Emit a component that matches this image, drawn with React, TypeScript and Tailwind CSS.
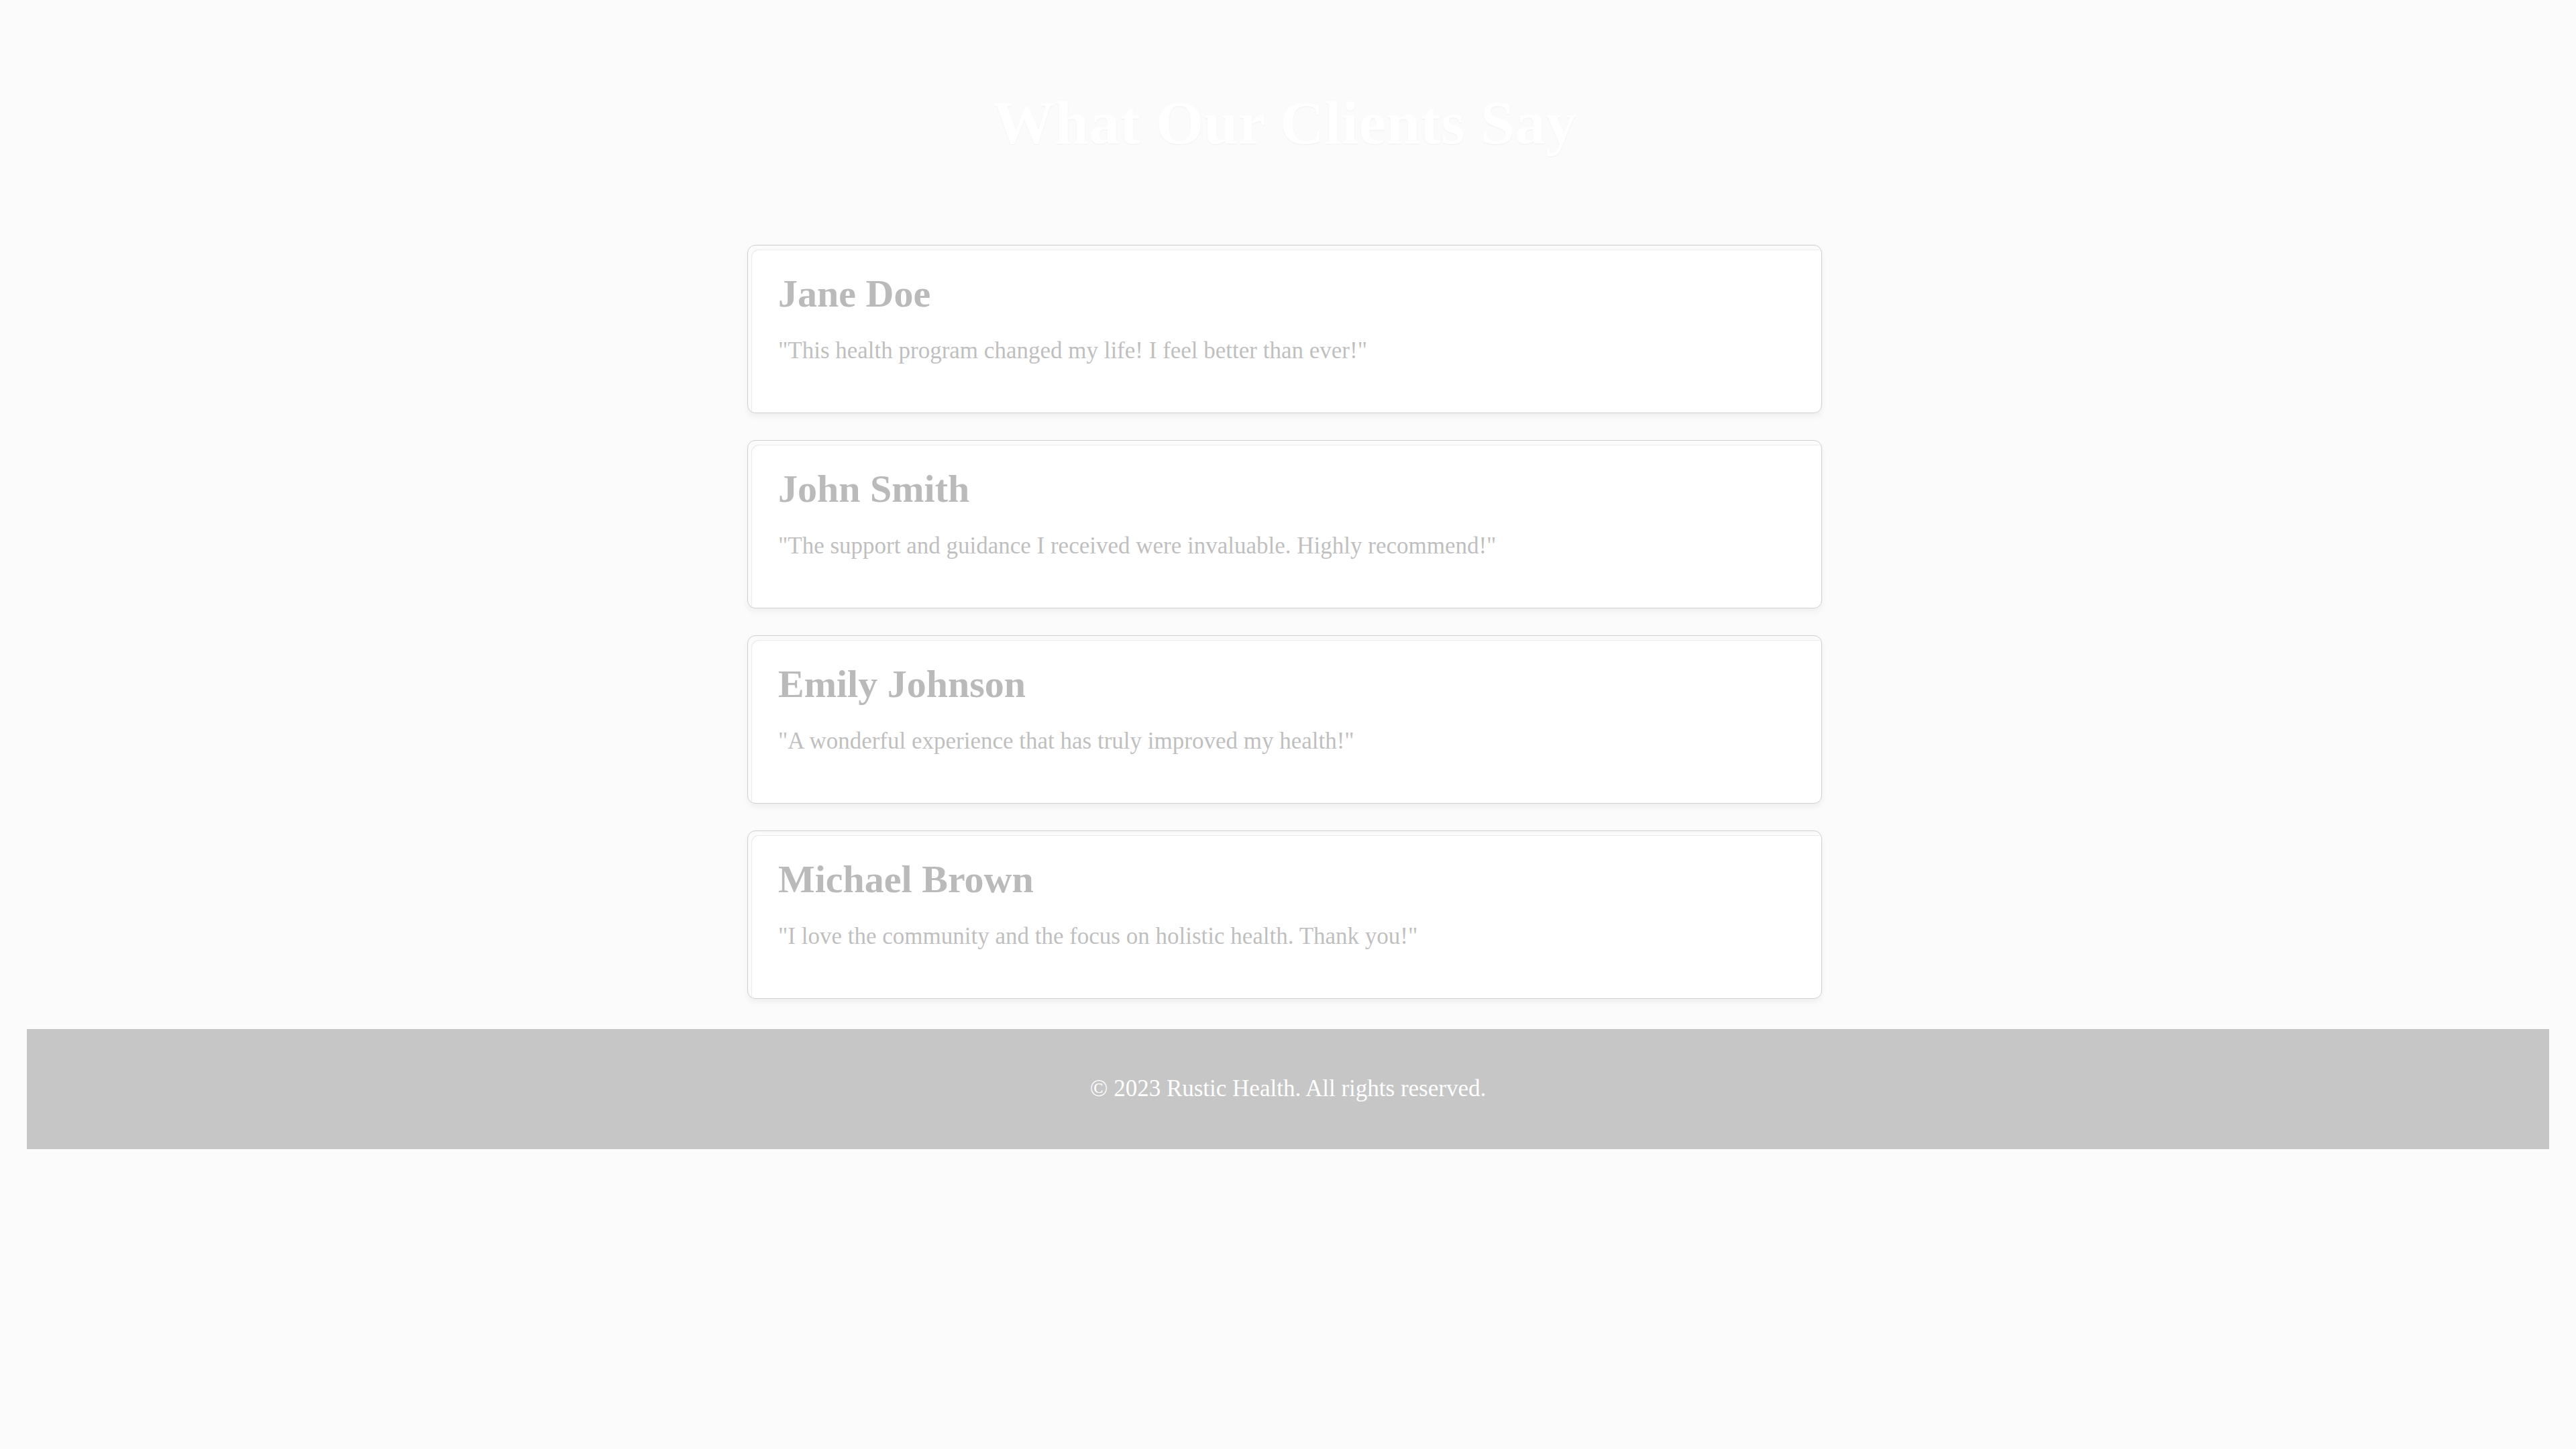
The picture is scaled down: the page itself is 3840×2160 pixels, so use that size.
import React from 'react';

const testimonials = [
  { name: 'Jane Doe', quote: '"This health program changed my life! I feel better than ever!"' },
  { name: 'John Smith', quote: '"The support and guidance I received were invaluable. Highly recommend!"' },
  { name: 'Emily Johnson', quote: '"A wonderful experience that has truly improved my health!"' },
  { name: 'Michael Brown', quote: '"I love the community and the focus on holistic health. Thank you!"' },
];

const App: React.FC = () => {
  return (
    <div className="min-h-screen bg-[#fbfbfb] font-['Liberation_Serif',serif]">
      {/* Testimonials */}
      <section className="pl-[40px] pr-[50px] pt-[128px]">
        <h2 className="text-center text-[92px] font-bold leading-[1.2] text-white [text-shadow:0_1px_2px_rgba(0,0,0,0.05)]">
          What Our Clients Say
        </h2>

        <div className="mx-auto mt-[127px] flex w-[1602px] flex-col gap-[40px]">
          {testimonials.map((t) => (
            <div
              key={t.name}
              className="h-[251px] rounded-[12px] border border-[#d0d0d0] bg-white pl-[45px] pr-[45px] pt-[37px] shadow-[inset_5px_6px_0_#fbfbfb,inset_6px_7px_0_#ebebeb,0_5px_10px_rgba(0,0,0,0.05)]"
            >
              <h3 className="text-[58px] font-bold leading-[1.2] text-[#bababa]">{t.name}</h3>
              <p className="mt-[24px] text-[35px] leading-[1.5] text-[#bfbfbf]">{t.quote}</p>
            </div>
          ))}
        </div>
      </section>

      {/* Footer */}
      <footer className="mx-[40px] mt-[45px] bg-[#c6c6c6] py-[63px] text-center">
        <p className="text-[35px] leading-[1.5] text-white">© 2023 Rustic Health. All rights reserved.</p>
      </footer>
    </div>
  );
};

export default App;
